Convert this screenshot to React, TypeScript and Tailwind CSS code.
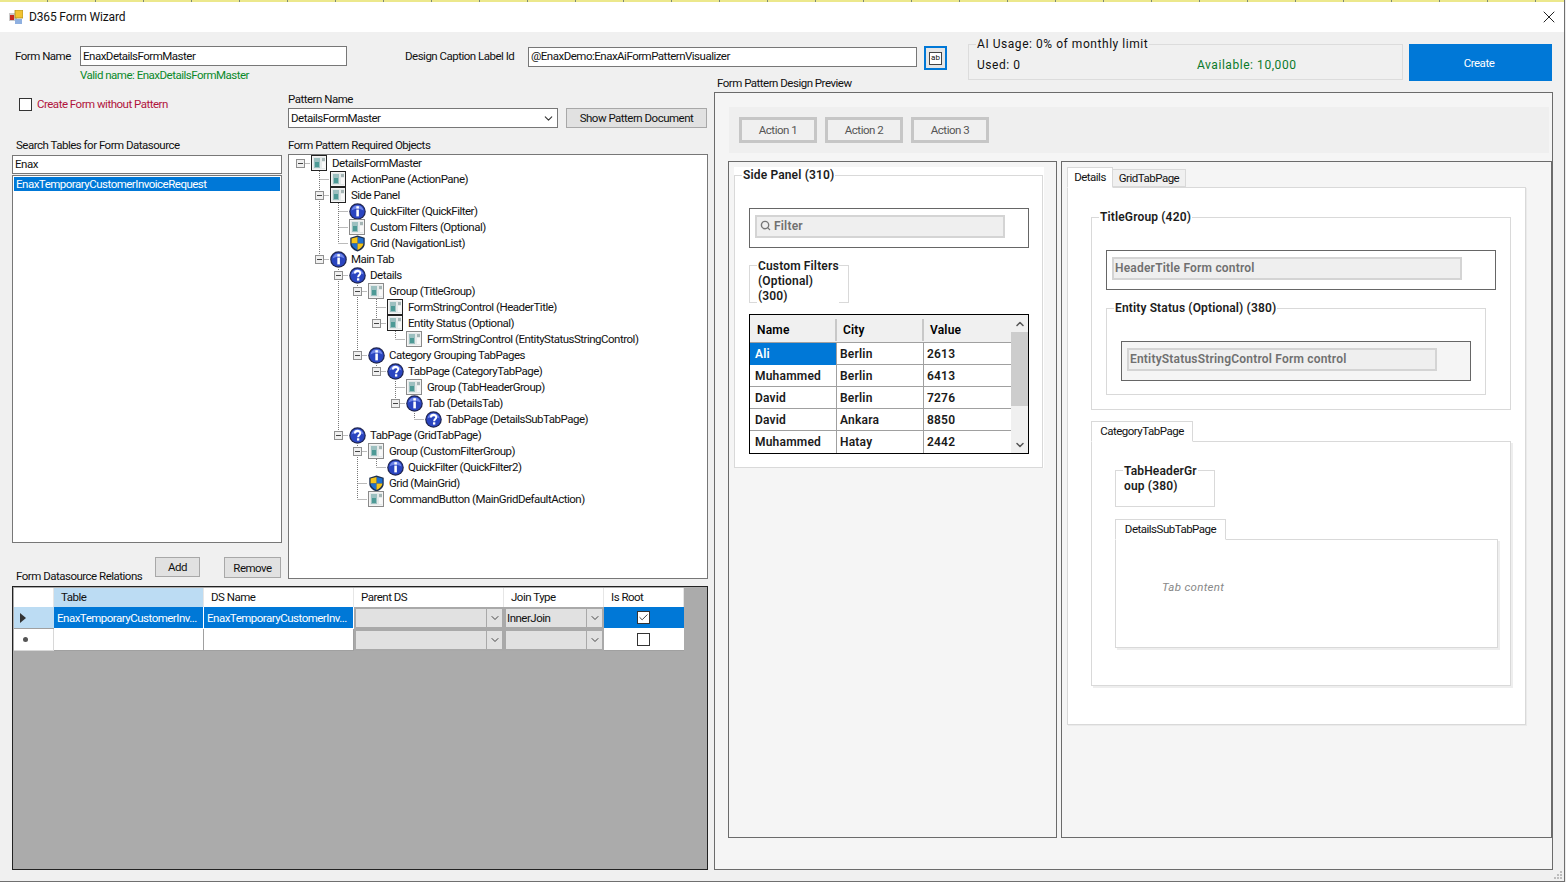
import type { ReactNode } from 'react';
import { Search, ChevronDown, ChevronUp, Check, X } from 'lucide-react';

type IconKind = 'box' | 'info' | 'help' | 'shield';

interface TreeItem {
  level: number;
  text: string;
  icon: IconKind;
  framed?: boolean;
}

const TREE: TreeItem[] = [
  { level: 0, text: 'DetailsFormMaster', icon: 'box', framed: true },
  { level: 1, text: 'ActionPane (ActionPane)', icon: 'box', framed: true },
  { level: 1, text: 'Side Panel', icon: 'box', framed: true },
  { level: 2, text: 'QuickFilter (QuickFilter)', icon: 'info' },
  { level: 2, text: 'Custom Filters (Optional)', icon: 'box' },
  { level: 2, text: 'Grid (NavigationList)', icon: 'shield' },
  { level: 1, text: 'Main Tab', icon: 'info' },
  { level: 2, text: 'Details', icon: 'help' },
  { level: 3, text: 'Group (TitleGroup)', icon: 'box' },
  { level: 4, text: 'FormStringControl (HeaderTitle)', icon: 'box', framed: true },
  { level: 4, text: 'Entity Status (Optional)', icon: 'box', framed: true },
  { level: 5, text: 'FormStringControl (EntityStatusStringControl)', icon: 'box' },
  { level: 3, text: 'Category Grouping TabPages', icon: 'info' },
  { level: 4, text: 'TabPage (CategoryTabPage)', icon: 'help' },
  { level: 5, text: 'Group (TabHeaderGroup)', icon: 'box' },
  { level: 5, text: 'Tab (DetailsTab)', icon: 'info' },
  { level: 6, text: 'TabPage (DetailsSubTabPage)', icon: 'help' },
  { level: 2, text: 'TabPage (GridTabPage)', icon: 'help' },
  { level: 3, text: 'Group (CustomFilterGroup)', icon: 'box' },
  { level: 4, text: 'QuickFilter (QuickFilter2)', icon: 'info' },
  { level: 3, text: 'Grid (MainGrid)', icon: 'shield' },
  { level: 3, text: 'CommandButton (MainGridDefaultAction)', icon: 'box' },
];

const PEOPLE = [
  ['Ali', 'Berlin', '2613'],
  ['Muhammed', 'Berlin', '6413'],
  ['David', 'Berlin', '7276'],
  ['David', 'Ankara', '8850'],
  ['Muhammed', 'Hatay', '2442'],
];

function hasNextSibling(index: number, level: number) {
  for (let i = index + 1; i < TREE.length; i++) {
    if (TREE[i].level < level) return false;
    if (TREE[i].level === level) return true;
  }
  return false;
}

function ancestorContinues(index: number, depth: number) {
  for (let i = index - 1; i >= 0; i--) {
    if (TREE[i].level === depth) return hasNextSibling(i, depth);
    if (TREE[i].level < depth) return false;
  }
  return false;
}

function NodeIcon({ kind, framed }: { kind: IconKind; framed?: boolean }) {
  if (kind === 'box') {
    return (
      <svg width="16" height="16" viewBox="0 0 16 16" className="shrink-0">
        <rect x="0.5" y="0.5" width="15" height="15" fill="#f4f4f4" stroke={framed ? '#222' : '#8a8a8a'} />
        <rect x="2" y="2" width="12" height="12" fill="#e4e9e9" />
        <rect x="3" y="3" width="6" height="10" fill="#9cc0c0" />
        <rect x="4" y="7" width="4" height="5" fill="#4d9a96" />
        <rect x="11" y="3" width="3" height="3" fill="#a5b5b5" />
        <rect x="11" y="7" width="3" height="6" fill="#f8f8f8" />
      </svg>
    );
  }
  if (kind === 'shield') {
    return (
      <svg width="17" height="17" viewBox="0 0 16 16" className="-mx-[0.5px] shrink-0">
        <path d="M8 .5 L14.8 2.6 V8.5 C14.8 12 11 14.6 8 15.6 C5 14.6 1.2 12 1.2 8.5 V2.6 Z" fill="#1c2f4f" />
        <path d="M8 1.8 L13.6 3.4 V8 H8 Z" fill="#1f6fd0" />
        <path d="M8 1.8 L2.4 3.4 V8 H8 Z" fill="#f5c518" />
        <path d="M2.4 8 H8 V14.2 C5.5 13.2 2.8 11 2.4 8 Z" fill="#1f6fd0" />
        <path d="M13.6 8 H8 V14.2 C10.5 13.2 13.2 11 13.6 8 Z" fill="#f5c518" />
      </svg>
    );
  }
  return (
    <svg width="17" height="17" viewBox="0 0 16 16" className="-mx-[0.5px] shrink-0">
      <circle cx="8" cy="8" r="7.8" fill="#20264f" />
      <circle cx="8" cy="8" r="6.7" fill="#2a45c0" />
      <path d="M2.4 7 A5.7 5.7 0 0 1 13.6 7 C10 5 6 5 2.4 7 Z" fill="#6f86e8" />
      {kind === 'info' ? (
        <>
          <rect x="6.9" y="3" width="2.4" height="2.2" fill="#fff" />
          <rect x="6.9" y="6.2" width="2.4" height="6.4" fill="#fff" />
        </>
      ) : (
        <>
          <path d="M5.6 6 C5.6 2.9 10.6 2.9 10.6 5.8 C10.6 7.6 8.6 7.6 8.6 9.6" fill="none" stroke="#fff" strokeWidth="1.9" />
          <rect x="7.5" y="10.6" width="2.2" height="2.2" fill="#fff" />
        </>
      )}
    </svg>
  );
}

function TreeCell({ index, depth, level }: { index: number; depth: number; level: number }) {
  const own = depth === level;
  const hasKids = own && index + 1 < TREE.length && TREE[index + 1].level > level;
  const next = own ? hasNextSibling(index, level) : ancestorContinues(index, depth);
  const up = own ? level > 0 : next;
  return (
    <svg width="19" height="16" viewBox="0 0 19 16" className="shrink-0">
      {up && <line x1="9.5" y1="0" x2="9.5" y2="8" stroke="#777" strokeDasharray="1 1" />}
      {next && <line x1="9.5" y1="8" x2="9.5" y2="16" stroke="#777" strokeDasharray="1 1" />}
      {own && <line x1="9.5" y1="8.5" x2="19" y2="8.5" stroke="#777" strokeDasharray="1 1" />}
      {hasKids && (
        <>
          <rect x="5.5" y="4.5" width="8" height="8" fill="#f0f0f0" stroke="#8f8f8f" />
          <line x1="7" y1="8.5" x2="12" y2="8.5" stroke="#444" />
        </>
      )}
    </svg>
  );
}

function TreeRow({ item, index }: { item: TreeItem; index: number }) {
  const depths = Array.from({ length: item.level + 1 }, (_, d) => d);
  return (
    <div className="flex h-4 items-center">
      {depths.map((d) => (
        <TreeCell key={d} index={index} depth={d} level={item.level} />
      ))}
      <span className="ml-px flex items-center">
        <NodeIcon kind={item.icon} framed={item.framed} />
      </span>
      <span className="ml-[5px] whitespace-nowrap">{item.text}</span>
    </div>
  );
}

function GroupBox({ label, className, labelClass, children }: { label: ReactNode; className: string; labelClass: string; children?: ReactNode }) {
  return (
    <div className={`relative border border-[#d9d9d9] ${className}`}>
      <span className={`absolute whitespace-nowrap text-[12px] font-semibold leading-[15px] tracking-[0.15px] text-[#1c1c1c] ${labelClass}`}>{label}</span>
      {children}
    </div>
  );
}

function ControlBox({ text, className, innerClass, icon }: { text: string; className: string; innerClass: string; icon?: boolean }) {
  return (
    <div className={`h-10 border border-[#666] pl-[5px] pt-[6px] ${className}`}>
      <div className={`flex h-[23px] items-center gap-[3px] border-2 border-[#d4d4d4] bg-[#efefef] pb-[2px] pl-[1px] text-[12px] font-semibold tracking-[0.2px] text-[#707070] ${innerClass}`}>
        {icon && <Search size={11} strokeWidth={3} className="ml-[2px] text-[#777]" />}
        {text}
      </div>
    </div>
  );
}

function ActionButton({ text }: { text: string }) {
  return (
    <button className="h-[26px] w-[78px] border-[3px] border-[#c6c6c6] bg-[#f0f0f0] text-[#555]">{text}</button>
  );
}

function ComboCell({ text }: { text?: string }) {
  return (
    <div className="flex h-full items-stretch border-2 border-[#a9a9a9] bg-[#e1e1e1] pl-[1px]">
      <span className="flex-1 leading-[19px]">{text}</span>
      <span className="flex w-4 items-center justify-center border-l border-[#a9a9a9]">
        <ChevronDown size={12} className="text-[#444]" />
      </span>
    </div>
  );
}

function GridCheck({ checked }: { checked?: boolean }) {
  return (
    <div className="flex size-[13px] items-center justify-center border border-[#333] bg-white">
      {checked && <Check size={11} strokeWidth={2} className="text-[#333]" />}
    </div>
  );
}

function DatasourceGrid() {
  const headClass = 'flex items-center pb-[2px] pl-[7px] bg-white border-r border-[#e6e6e6]';
  const textCell = 'whitespace-nowrap pl-[3px] leading-[22px] border-r border-b border-white';
  return (
    <div className="h-[284px] border border-[#222] bg-[#ababab] pl-px pt-px">
      <div className="grid w-[670px] grid-cols-[40px_150px_150px_150px_100px_80px] grid-rows-[19px_22px_22px]">
        <div className="border-r border-[#e6e6e6] bg-white" />
        <div className={`${headClass} !bg-[#bcdcf3]`}>Table</div>
        <div className={headClass}>DS Name</div>
        <div className={headClass}>Parent DS</div>
        <div className={headClass}>Join Type</div>
        <div className={headClass}>Is Root</div>

        <div className="flex items-center border-b border-[#a0a0a0] bg-[#bcdcf3] pl-[6px]">
          <svg width="6" height="10" viewBox="0 0 6 10"><path d="M0 0 L6 5 L0 10 Z" fill="#333" /></svg>
        </div>
        <div className={`${textCell} bg-[#0078d7] text-white`}>EnaxTemporaryCustomerInv...</div>
        <div className={`${textCell} bg-[#0078d7] text-white`}>EnaxTemporaryCustomerInv...</div>
        <ComboCell />
        <ComboCell text="InnerJoin" />
        <div className="flex items-center justify-center border-b border-white bg-[#0078d7] pr-[2px]">
          <GridCheck checked />
        </div>

        <div className="flex items-center border-b border-r border-[#d8d8d8] bg-white pl-[9px]">
          <span className="size-[5px] rounded-full bg-[#555]" />
        </div>
        <div className="border-b border-r border-[#a0a0a0] bg-white" />
        <div className="border-b border-r border-[#a0a0a0] bg-white" />
        <ComboCell />
        <ComboCell />
        <div className="flex items-center justify-center border-b border-[#a0a0a0] bg-white pr-[2px]">
          <GridCheck />
        </div>
      </div>
    </div>
  );
}

function PeopleTable() {
  return (
    <div className="mt-[11px] ml-[14px] flex h-[140px] w-[280px] border border-black text-[12px] font-semibold tracking-[0.2px] text-[#1a1a1a]">
      <div className="w-[261px] shrink-0">
        <div className="grid h-[28px] grid-cols-[87px_87px_87px] items-center border-b border-[#a0a0a0] bg-[#f0f0f0] pt-[2px] text-black">
          <span className="ml-px border-r-2 border-[#c8c8c8] pl-[6px] leading-[22px]">Name</span>
          <span className="border-r-2 border-[#c8c8c8] pl-[6px] leading-[22px]">City</span>
          <span className="pl-[6px]">Value</span>
        </div>
        {PEOPLE.map((row, i) => (
          <div key={i} className="grid h-[22px] grid-cols-[87px_87px_87px] border-b border-[#a0a0a0] bg-white leading-[22px] last:border-b-0">
            <span className={`border-r border-[#a0a0a0] pl-[5px] ${i === 0 ? 'bg-[#0078d7] text-white' : ''}`}>{row[0]}</span>
            <span className="border-r border-[#a0a0a0] pl-[3px]">{row[1]}</span>
            <span className="pl-[3px]">{row[2]}</span>
          </div>
        ))}
      </div>
      <div className="flex flex-1 flex-col items-center bg-[#f0f0f0]">
        <ChevronUp size={12} strokeWidth={3} className="mt-[3px] text-[#555]" />
        <div className="mt-[2px] h-[74px] w-full bg-[#cdcdcd]" />
        <ChevronDown size={12} strokeWidth={3} className="mt-auto mb-[2px] text-[#555]" />
      </div>
    </div>
  );
}

function SidePanel() {
  return (
    <div className="h-[677px] w-[329px] shrink-0 border border-[#6b6b6b] pl-[5px] pt-[5px]">
      <div className="h-[301px] w-[310px] bg-white pt-[8px]">
        <GroupBox label="Side Panel (310)" className="h-[293px] w-[309px]" labelClass="left-[7px] top-[-8px] bg-white px-px">
          <div className="ml-[14px] pt-[32px]">
            <ControlBox text="Filter" className="w-[280px]" innerClass="w-[250px]" icon />
          </div>
          <div className="ml-[14px] mt-[17px]">
            <GroupBox
              label={<>Custom Filters<br />(Optional)<br />(300)</>}
              className="h-[38px] w-[100px]"
              labelClass="left-[7px] top-[-7px] w-[82px] bg-white px-px"
            />
          </div>
          <PeopleTable />
        </GroupBox>
      </div>
    </div>
  );
}

function TabHead({ text, className }: { text: string; className: string }) {
  return (
    <div className={`relative z-10 -mb-px flex items-center justify-center border border-[#d9d9d9] bg-white pb-px ${className}`}>{text}</div>
  );
}

function DetailsPanel() {
  return (
    <div className="h-[677px] w-[491px] border border-[#6b6b6b] pl-[5px] pt-[5px]">
      <div className="flex items-end">
        <TabHead text="Details" className="h-[21px] w-[46px] border-b-white" />
        <div className="flex h-[18px] w-[73px] items-center justify-center border border-l-0 border-[#d9d9d9] bg-[#f0f0f0]">GridTabPage</div>
      </div>
      <div className="h-[538px] w-[459px] border border-[#d9d9d9] bg-white pl-[23px] pt-[29px] shadow-[1px_1px_0_#eaeaea]">
        <GroupBox label="TitleGroup (420)" className="h-[193px] w-[420px]" labelClass="left-[7px] top-[-8px] bg-white px-px">
          <div className="ml-[14px] pt-[32px]">
            <ControlBox text="HeaderTitle Form control" className="w-[390px]" innerClass="w-[350px]" />
          </div>
          <GroupBox label="Entity Status (Optional) (380)" className="ml-[14px] mt-[18px] h-[87px] w-[380px]" labelClass="left-[7px] top-[-8px] bg-white px-px">
            <div className="ml-[14px] pt-[32px]">
              <ControlBox text="EntityStatusStringControl Form control" className="w-[350px] bg-[#f5f5f5]" innerClass="w-[310px]" />
            </div>
          </GroupBox>
        </GroupBox>

        <div className="mt-[11px]">
          <TabHead text="CategoryTabPage" className="h-[21px] w-[102px] border-b-white" />
          <div className="h-[245px] w-[420px] border border-[#d9d9d9] bg-white pl-[23px] pt-[28px] shadow-[2px_2px_0_#eeeeee]">
            <GroupBox
              label={<>TabHeaderGr<br />oup (380)</>}
              className="h-[37px] w-[100px]"
              labelClass="left-[7px] top-[-7px] bg-white px-px"
            />
            <div className="mt-[12px]">
              <TabHead text="DetailsSubTabPage" className="h-[21px] w-[111px] border-b-white" />
              <div className="h-[109px] w-[383px] border border-[#d9d9d9] bg-white pl-[46px] pt-[39px] shadow-[2px_2px_0_#eeeeee]">
                <span className="italic tracking-[0.3px] text-[#888]">Tab content</span>
              </div>
            </div>
          </div>
        </div>
      </div>
    </div>
  );
}

export default function App() {
  return (
    <div className="flex h-[882px] w-[1566px] overflow-hidden bg-[#ececec] font-['Roboto',sans-serif] text-[11.5px] leading-4 tracking-[-0.5px] text-[#111]">
      <div className="relative flex h-full w-[1565px] shrink-0 flex-col border-b border-r border-[#6f6f6f] bg-[#f0f0f0]">
        <div className="h-[2px] bg-[repeating-linear-gradient(90deg,#ece88c_0_47px,#7d8a70_47px_48px)]" />

        {/* title bar */}
        <div className="flex h-[30px] items-center bg-white pl-[9px] pr-[5px]">
          <svg width="14" height="14" viewBox="0 0 14 14">
            <rect x="0" y="3" width="8" height="8" fill="#c9c9c9" />
            <rect x="1" y="5" width="4" height="5" fill="#c8281e" />
            <rect x="6" y="0" width="8" height="8" fill="#f2c230" stroke="#a88a20" strokeWidth="0.8" />
            <rect x="6" y="9" width="7" height="5" fill="#8fb0e0" />
          </svg>
          <span className="ml-[6px] text-[12px] tracking-[-0.15px]">D365 Form Wizard</span>
          <X size={20} strokeWidth={1.2} className="ml-auto text-[#222]" />
        </div>

        {/* top row */}
        <div className="mt-3 flex h-[37px] pl-[15px]">
          <div className="w-[332px]">
            <div className="mt-[2px] flex items-center">
              <span className="w-[65px]">Form Name</span>
              <div className="h-5 w-[267px] border border-[#777] bg-white pl-[2px] leading-[18px]">EnaxDetailsFormMaster</div>
            </div>
            <div className="mt-[1px] pl-[65px] text-[#0a8a2a]">Valid name: EnaxDetailsFormMaster</div>
          </div>
          <div className="ml-[58px] mt-[3px] flex h-5 items-center">
            <span className="w-[123px] pb-[2px] leading-[16px]">Design Caption Label Id</span>
            <div className="h-5 w-[389px] border border-[#777] bg-white pl-[2px] leading-[17px]">@EnaxDemo:EnaxAiFormPatternVisualizer</div>
          </div>
          <button className="ml-[7px] mt-[2px] flex h-6 w-[23px] items-center justify-center border-2 border-[#0078d7] bg-[#e6e6e6]">
            <span className="flex size-[13px] items-center justify-center border border-[#444] bg-white text-[8px] leading-none tracking-normal">ab</span>
          </button>
          <div className="relative ml-[21px] h-[36px] w-[435px] border border-[#dcdcdc] text-[12px] tracking-[0.55px]">
            <span className="absolute left-[7px] top-[-9px] bg-[#f0f0f0] px-px">AI Usage: 0% of monthly limit</span>
            <div className="flex pl-[8px] pt-[12px]">
              <span className="w-[220px]">Used: 0</span>
              <span className="text-[#0a7a2a]">Available: 10,000</span>
            </div>
          </div>
          <button className="ml-[6px] h-[37px] w-[143px] bg-[#0078d7] pr-[3px] text-white">Create</button>
        </div>

        {/* lower row */}
        <div className="flex flex-1 pl-3">
          <div className="w-[696px] shrink-0">
            <div className="flex h-[498px]">
              <div className="flex w-[270px] flex-col">
                <div className="mt-[15px] flex items-center pl-[7px]">
                  <span className="size-[13px] border border-[#333] bg-white" />
                  <span className="ml-[5px] text-[#b0143c]">Create Form without Pattern</span>
                </div>
                <div className="mt-[25px] pl-[4px]">Search Tables for Form Datasource</div>
                <div className="mt-[2px] h-[19px] border border-[#777] bg-white pl-[2px] leading-[17px]">Enax</div>
                <div className="mt-px h-[368px] border border-[#777] bg-white p-px">
                  <div className="h-[14px] bg-[#0078d7] pl-[2px] leading-[14px] text-white">EnaxTemporaryCustomerInvoiceRequest</div>
                </div>
                <div className="mt-auto flex items-end pl-[4px]">
                  <span className="-mb-[5px] w-[139px] whitespace-nowrap">Form Datasource Relations</span>
                  <button className="mb-[2px] h-[20px] w-[45px] border border-[#a8a8a8] bg-[#e1e1e1]">Add</button>
                  <button className="mb-px ml-[24px] h-[21px] w-[57px] border border-[#a8a8a8] bg-[#e1e1e1]">Remove</button>
                </div>
              </div>
              <div className="ml-[6px] flex w-[420px] flex-col">
                <div className="mt-[10px]">Pattern Name</div>
                <div className="mt-px flex">
                  <div className="flex h-[20px] w-[270px] items-center justify-between border border-[#777] bg-white pl-[2px] pr-[2px]">
                    DetailsFormMaster
                    <ChevronDown size={13} className="text-[#333]" />
                  </div>
                  <button className="ml-2 h-[20px] w-[141px] border border-[#a8a8a8] bg-[#e1e1e1]">Show Pattern Document</button>
                </div>
                <div className="mt-[9px]">Form Pattern Required Objects</div>
                <div className="mt-px h-[425px] border border-[#777] bg-white pl-[2px]">
                  {TREE.map((item, i) => (
                    <TreeRow key={i} item={item} index={i} />
                  ))}
                </div>
              </div>
            </div>
            <div className="mt-[7px]">
              <DatasourceGrid />
            </div>
          </div>

          <div className="ml-[6px]">
            <div className="-mt-[6px] pl-[3px]">Form Pattern Design Preview</div>
            <div className="mt-px h-[778px] w-[839px] border border-[#6b6b6b] bg-[#f5f5f5] pl-[13px] pt-[14px]">
              <div className="ml-px flex h-[46px] w-[820px] items-center gap-2 bg-[#efefef] pl-[10px]">
                <ActionButton text="Action 1" />
                <ActionButton text="Action 2" />
                <ActionButton text="Action 3" />
              </div>
              <div className="mt-[8px] flex gap-[4px]">
                <SidePanel />
                <DetailsPanel />
              </div>
            </div>
          </div>
        </div>

        {/* size grip */}
        <svg width="8" height="8" viewBox="0 0 8 8" className="absolute bottom-[2px] right-[2px]">
          <rect x="6" y="0" width="2" height="2" fill="#bdbdbd" />
          <rect x="3" y="3" width="2" height="2" fill="#bdbdbd" />
          <rect x="6" y="3" width="2" height="2" fill="#bdbdbd" />
          <rect x="0" y="6" width="2" height="2" fill="#bdbdbd" />
          <rect x="3" y="6" width="2" height="2" fill="#bdbdbd" />
          <rect x="6" y="6" width="2" height="2" fill="#bdbdbd" />
        </svg>
      </div>
    </div>
  );
}
